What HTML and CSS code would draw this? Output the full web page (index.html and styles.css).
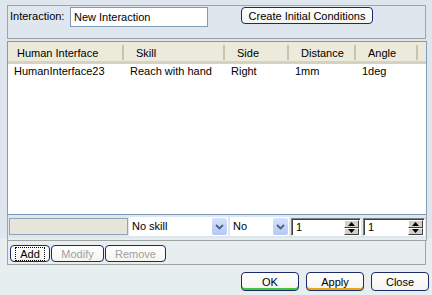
FILE: index.html
```html
<!DOCTYPE html>
<html lang="en">
<head>
    <meta charset="UTF-8">
    <title>Interaction</title>
    <link rel="stylesheet" href="styles.css">
</head>
<body>

    <!-- Cabeçalho da interação -->
    <div class="top-frame">
        <label class="lbl" for="nome">Interaction:</label>
        <input type="text" id="nome" class="name-box" value="New Interaction">
        <button class="btn btn-create">Create Initial Conditions</button>
    </div>

    <!-- Lista -->
    <div class="list">
        <div class="list-head">
            <div class="col c1">Human Interface</div>
            <div class="col c2">Skill</div>
            <div class="col c3">Side</div>
            <div class="col c4">Distance</div>
            <div class="col c5">Angle</div>
            <div class="col c6"></div>
        </div>
        <div class="list-row">
            <div class="cell c1">HumanInterface23</div>
            <div class="cell c2">Reach with hand</div>
            <div class="cell c3">Right</div>
            <div class="cell c4">1mm</div>
            <div class="cell c5">1deg</div>
        </div>
    </div>

    <!-- Linha de edição -->
    <div class="editor">
        <div class="blank-cell"></div>
        <div class="combo combo-skill">
            <span class="combo-text">No skill</span>
            <span class="combo-arrow"><svg width="9" height="6" viewBox="0 0 9 6"><path d="M1 1 L4.5 4.5 L8 1" fill="none" stroke="#4d6185" stroke-width="1.8"/></svg></span>
        </div>
        <div class="combo combo-side">
            <span class="combo-text">No</span>
            <span class="combo-arrow"><svg width="9" height="6" viewBox="0 0 9 6"><path d="M1 1 L4.5 4.5 L8 1" fill="none" stroke="#4d6185" stroke-width="1.8"/></svg></span>
        </div>
        <div class="spin spin-a">
            <span class="spin-text">1</span>
            <span class="spin-btns">
                <span class="spin-btn"><svg width="7" height="4" viewBox="0 0 7 4"><path d="M0 4 L3.5 0 L7 4 Z" fill="#000"/></svg></span>
                <span class="spin-btn"><svg width="7" height="4" viewBox="0 0 7 4"><path d="M0 0 L3.5 4 L7 0 Z" fill="#000"/></svg></span>
            </span>
        </div>
        <div class="spin spin-b">
            <span class="spin-text">1</span>
            <span class="spin-btns">
                <span class="spin-btn"><svg width="7" height="4" viewBox="0 0 7 4"><path d="M0 4 L3.5 0 L7 4 Z" fill="#000"/></svg></span>
                <span class="spin-btn"><svg width="7" height="4" viewBox="0 0 7 4"><path d="M0 0 L3.5 4 L7 0 Z" fill="#000"/></svg></span>
            </span>
        </div>
    </div>

    <!-- Botões da lista -->
    <div class="actions">
        <button class="btn btn-small"><span class="focus">Add</span></button>
        <button class="btn btn-small btn-off">Modify</button>
        <button class="btn btn-small btn-off">Remove</button>
    </div>

    <!-- Botões do diálogo -->
    <div class="footer">
        <button class="btn btn-dlg btn-ok">OK</button>
        <button class="btn btn-dlg btn-apply">Apply</button>
        <button class="btn btn-dlg">Close</button>
    </div>

</body>
</html>
```

FILE: styles.css
```css
body {
    margin: 0;
    width: 432px;
    height: 295px;
    font-family: "Liberation Sans", Arial, sans-serif;
    font-size: 11px;
    color: #000;
    background: linear-gradient(to bottom, #dfe6ee 0, #dfe6ee 238px, #e7eeef 238px);
    overflow: hidden;
}

.top-frame {
    margin: 5px 6px 0 7px;
    height: 31px;
    border: 1px solid #a3a3a3;
    display: flex;
    align-items: flex-start;
    padding: 1px 0 0 1px;
}

.lbl {
    margin-top: 3px;
    margin-left: 1px;
    width: 60px;
}

.name-box {
    width: 130px;
    height: 16px;
    margin: 0;
    padding: 1px 3px;
    border: 1px solid #7f9db9;
    font: inherit;
    background: #fff;
}

.btn {
    font: inherit;
    background: linear-gradient(to bottom, #ffffff, #f4f4f0);
    border: 1px solid #1c2a6a;
    border-radius: 4px;
    padding: 0;
    color: #000;
}

.btn-create {
    margin-left: 33px;
    width: 132px;
    height: 17px;
}

/* lista */
.list {
    margin: 2px 5px 0 7px;
    height: 172px;
    border: 1px solid #7f9db9;
    background: #fff;
}

.list-head, .list-row {
    display: grid;
    grid-template-columns: 116px 101px 64px 67px 62px 1fr;
}

.list-head {
    height: 19px;
    background: #ebeadb;
    border-bottom: 3px solid #d6d2c2;
}

.col {
    padding: 3px 0 0 12px;
    line-height: 16px;
    border-right: 2px solid transparent;
    border-image: linear-gradient(to bottom, transparent 4px, #c7c5b2 4px, #c7c5b2 17px, transparent 17px) 1;
}

.col.c1 { padding-left: 9px; }
.col.c6 { border: none; }

.cell {
    padding-left: 6px;
    line-height: 15px;
}

/* linha de edição */
.editor {
    margin: 0 5px 0 7px;
    height: 23px;
    border-left: 1px solid #a3a3a3;
    border-right: 1px solid #a3a3a3;
    border-bottom: 1px solid #a3a3a3;
    display: flex;
    align-items: flex-start;
    padding-top: 2px;
}

.blank-cell {
    width: 117px;
    height: 15px;
    margin: 1px 1px 0 1px;
    border: 1px solid #8fa4ba;
    background: #e6e5d9;
}

.combo {
    display: flex;
    height: 19px;
    background: #fff;
    margin-right: 2px;
}

.combo-skill { width: 99px; }
.combo-side { width: 59px; }

.combo-text {
    flex: 1;
    padding: 3px 0 0 3px;
}

.combo-arrow {
    width: 15px;
    height: 17px;
    margin: 1px 1px 0 0;
    border-radius: 2px;
    background: linear-gradient(to bottom, #d6e2fc, #b4c8f6);
    display: flex;
    align-items: center;
    justify-content: center;
}

.spin {
    display: flex;
    height: 16px;
    margin-top: 1px;
    background: #fff;
    border-top: 1px solid #808080;
    border-left: 1px solid #808080;
    border-right: 1px solid #fff;
    border-bottom: 1px solid #fff;
    box-shadow: inset 1px 1px 0 #404040;
}

.spin-a { width: 68px; margin-right: 2px; }
.spin-b { width: 60px; }

.spin-text {
    flex: 1;
    padding: 2px 0 0 4px;
}

.spin-btns {
    display: flex;
    flex-direction: column;
    width: 15px;
    margin: 1px 1px 0 0;
}

.spin-btn {
    height: 6px;
    background: #d4d0c8;
    border-top: 1px solid #fff;
    border-left: 1px solid #fff;
    border-right: 1px solid #404040;
    border-bottom: 1px solid #404040;
    display: flex;
    align-items: center;
    justify-content: center;
}

/* botões da lista */
.actions {
    margin: 0 6px 0 7px;
    height: 19px;
    border: 1px solid #a3a3a3;
    border-top: none;
    display: flex;
    padding: 4px 0 0 2px;
}

.btn-small {
    height: 17px;
    margin-right: 1px;
}

.btn-small:nth-child(1) { width: 40px; }
.btn-small:nth-child(2) { width: 53px; }
.btn-small:nth-child(3) { width: 61px; }

.focus {
    border: 1px dotted #000;
    padding: 0 4px;
}

.btn-off {
    color: #a0a0a0;
}

/* rodapé */
.footer {
    display: flex;
    justify-content: flex-end;
    gap: 7px;
    margin: 7px 3px 0 0;
}

.btn-dlg {
    width: 58px;
    height: 19px;
}

.btn-ok {
    box-shadow: inset 0 -2px 0 #3fc43a;
}

.btn-apply {
    box-shadow: inset 0 -2px 0 #e8a319;
}
```
